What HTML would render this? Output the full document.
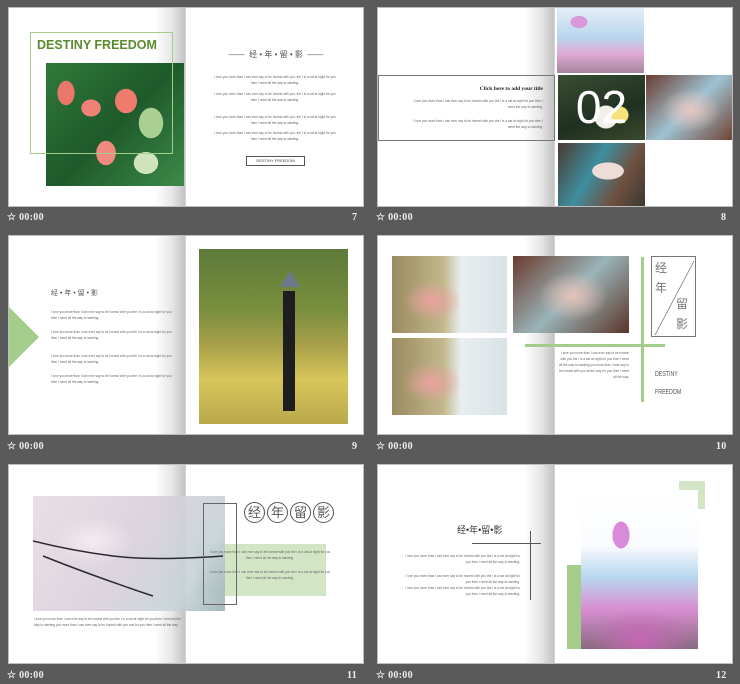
<!DOCTYPE html>
<html><head><meta charset="utf-8">
<style>
*{margin:0;padding:0;box-sizing:border-box}
body{width:740px;height:684px;background:#5a5a5a;position:relative;overflow:hidden;font-family:"Liberation Sans","Noto Sans CJK SC",sans-serif}
.s{position:absolute;width:356px;height:200px;background:#fff;border:1px solid #bdbdbd;overflow:hidden}
.sp{position:absolute;left:146px;top:0;width:31px;height:200px;background:linear-gradient(90deg,rgba(255,255,255,0),#e6e6e6 55%,#c4c4c4 95%,#d8d8d8)}
.a{position:absolute}
.ft{position:absolute;color:#eee;font-family:"Liberation Serif",serif;font-weight:bold;font-size:10px;letter-spacing:.3px}
.tx{position:absolute;font-size:3.2px;line-height:6px;color:#666;font-family:"Liberation Sans",sans-serif}
.cj{font-family:"Liberation Sans","Noto Sans CJK SC",sans-serif;color:#555}
</style></head><body>

<!-- Slide 7 -->
<div class="s" style="left:8px;top:7px">
<div class="sp"></div>
<div class="a" style="left:37px;top:55px;width:138px;height:123px;background:
radial-gradient(ellipse 14px 20px at 20px 30px,#e9776a 60%,transparent 62%),
radial-gradient(ellipse 16px 14px at 45px 45px,#ef8176 60%,transparent 62%),
radial-gradient(ellipse 18px 20px at 80px 38px,#ef7b6c 60%,transparent 62%),
radial-gradient(ellipse 16px 20px at 60px 90px,#f08a7e 60%,transparent 62%),
radial-gradient(ellipse 20px 18px at 100px 100px,#cfe3bd 60%,transparent 62%),
radial-gradient(ellipse 20px 25px at 105px 60px,#a9cf93 60%,transparent 62%),
linear-gradient(135deg,#2f7a3a,#1e5a2a 50%,#3d8a4a)"></div>
<div class="a" style="left:21px;top:24px;width:143px;height:122px;border:1.5px solid #a4cd8c"></div>
<div class="a" style="left:28px;top:30px;font-size:12.5px;font-weight:bold;color:#5a8a2e;white-space:nowrap">DESTINY FREEDOM</div>
<div class="a cj" style="left:214px;top:41px;width:106px;font-size:8px;text-align:center;white-space:nowrap">——&nbsp; 经 • 年 • 留 • 影 &nbsp;——</div>
<div class="tx" style="left:205px;top:66px;width:122px;text-align:center">I love you more than I can ever say to be honest with you, the I is a cat at night for you then I need all the way to wanting.</div>
<div class="tx" style="left:205px;top:83px;width:122px;text-align:center">I love you more than I can ever say to be honest with you, the I is a cat at night for you then I need all the way to wanting.</div>
<div class="tx" style="left:205px;top:106px;width:122px;text-align:center">I love you more than I can ever say to be honest with you, the I is a cat at night for you then I need all the way to wanting.</div>
<div class="tx" style="left:205px;top:122px;width:122px;text-align:center">I love you more than I can ever say to be honest with you, the I is a cat at night for you then I need all the way to wanting.</div>
<div class="a" style="left:237px;top:148px;width:59px;height:10px;border:1px solid #555;font-size:4px;text-align:center;line-height:8px;color:#444">DESTINY FREEDOM</div>
</div>
<div class="ft" style="left:7px;top:212px">☆ 00:00</div>
<div class="ft" style="left:352px;top:212px">7</div>

<!-- Slide 8 -->
<div class="s" style="left:377px;top:7px">
<div class="sp"></div>
<div class="a" style="left:179px;top:0;width:87px;height:65px;background:
radial-gradient(ellipse 14px 10px at 22px 14px,#d998d8 60%,transparent 62%),
linear-gradient(180deg,#e4eef6,#b9d6ee 45%,#e1a9d6 70%,#a5869a)"></div>
<div class="a" style="left:0;top:67px;width:177px;height:66px;border:1px solid #777"></div>
<div class="a" style="left:40px;top:78px;width:125px;text-align:right;font-family:'Liberation Serif',serif;font-weight:bold;font-size:5.5px;color:#222">Click here to add your title</div>
<div class="tx" style="left:30px;top:90px;width:135px;text-align:right">I love you more than I can ever say to be honest with you the I is a cat at night for you then I need the way to wanting.</div>
<div class="tx" style="left:30px;top:110px;width:135px;text-align:right">I love you more than I can ever say to be honest with you the I is a cat at night for you then I need the way to wanting.</div>
<div class="a" style="left:180px;top:67px;width:87px;height:65px;background:
radial-gradient(circle at 62px 40px,#f6e27a 8px,transparent 9px),
radial-gradient(circle at 48px 42px,#f2f0ea 11px,transparent 12px),
linear-gradient(160deg,#3a4e32,#1f3020 60%,#3c4a2c)"></div>
<div class="a" style="left:180px;top:70px;width:87px;text-align:center;color:#fff;font-size:46px;line-height:58px;font-family:'Liberation Sans',sans-serif">02</div>
<div class="a" style="left:268px;top:67px;width:88px;height:65px;background:
radial-gradient(ellipse 30px 22px at 45px 35px,#e8c6bf,transparent),
linear-gradient(135deg,#6a3b2e,#9fc3d3 50%,#704030)"></div>
<div class="a" style="left:180px;top:135px;width:87px;height:65px;background:
radial-gradient(ellipse 26px 14px at 50px 28px,#eddcd8 60%,transparent 62%),
linear-gradient(120deg,#4b3a30,#3e8ea0 40%,#6f5040 70%,#3a3830)"></div>
</div>
<div class="ft" style="left:376px;top:212px">☆ 00:00</div>
<div class="ft" style="left:721px;top:212px">8</div>

<!-- Slide 9 -->
<div class="s" style="left:8px;top:235px">
<div class="sp"></div>
<div class="a" style="left:0;top:71px;width:0;height:0;border-top:30px solid transparent;border-bottom:30px solid transparent;border-left:30px solid #a4cd8c"></div>
<div class="a cj" style="left:42px;top:52px;font-size:7px;white-space:nowrap">经 • 年 • 留 • 影</div>
<div class="tx" style="left:42px;top:73px;width:122px">I love you more than I can ever say to be honest with you the I is a cat at night for you then I need all the way to wanting.</div>
<div class="tx" style="left:42px;top:93px;width:122px">I love you more than I can ever say to be honest with you the I is a cat at night for you then I need all the way to wanting.</div>
<div class="tx" style="left:42px;top:117px;width:122px">I love you more than I can ever say to be honest with you the I is a cat at night for you then I need all the way to wanting.</div>
<div class="tx" style="left:42px;top:137px;width:122px">I love you more than I can ever say to be honest with you the I is a cat at night for you then I need all the way to wanting.</div>
<div class="a" style="left:190px;top:13px;width:149px;height:175px;background:linear-gradient(180deg,#5d7a3a,#7a8f3e 35%,#a9a04a 55%,#d8c65a 75%,#b9a94c)"></div>
<div class="a" style="left:274px;top:55px;width:12px;height:120px;background:#1e1e1e"></div>
<div class="a" style="left:271px;top:35px;width:0;height:0;border-left:10px solid transparent;border-right:10px solid transparent;border-bottom:16px solid #6d7a8e"></div>
</div>
<div class="ft" style="left:7px;top:441px">☆ 00:00</div>
<div class="ft" style="left:352px;top:441px">9</div>

<!-- Slide 10 -->
<div class="s" style="left:377px;top:235px">
<div class="sp"></div>
<div class="a" style="left:14px;top:20px;width:115px;height:77px;background:radial-gradient(ellipse 30px 20px at 40px 45px,#eaa2a0,transparent),linear-gradient(90deg,#9a8a60,#c3b88c 45%,#e9eef0 60%,#d8e3e6)"></div>
<div class="a" style="left:14px;top:102px;width:115px;height:77px;background:radial-gradient(ellipse 30px 20px at 40px 45px,#eaa2a0,transparent),linear-gradient(90deg,#9a8a60,#c3b88c 45%,#e9eef0 60%,#d8e3e6)"></div>
<div class="a" style="left:135px;top:20px;width:116px;height:77px;background:radial-gradient(ellipse 35px 25px at 60px 40px,#e7c2b8,transparent),linear-gradient(135deg,#6a3a2e,#9ab4b8 50%,#5a3428)"></div>
<div class="a" style="left:263px;top:21px;width:3px;height:145px;background:#a4cd8c"></div>
<div class="a" style="left:147px;top:108px;width:140px;height:3px;background:#a4cd8c"></div>
<div class="a" style="left:273px;top:20px;width:45px;height:81px;border:1px solid #777;overflow:hidden">
<svg width="45" height="81" style="position:absolute;left:0;top:0"><line x1="42" y1="4" x2="3" y2="78" stroke="#777" stroke-width="0.8"/></svg>
<div class="a cj" style="left:3px;top:2px;font-size:12px;color:#777">经</div>
<div class="a cj" style="left:3px;top:22px;font-size:12px;color:#777">年</div>
<div class="a cj" style="left:24px;top:38px;font-size:12px;color:#777">留</div>
<div class="a cj" style="left:24px;top:58px;font-size:12px;color:#777">影</div>
</div>
<div class="tx" style="left:180px;top:114px;width:71px;text-align:right">I love you more than I can ever say to be honest with you the I is a cat at night for you then I need all the way to wanting you more than I ever say to be honest with you all the way for you then I need all the way.</div>
<div class="a" style="left:277px;top:130px;font-size:7px;color:#555;transform:scaleX(.75);transform-origin:left;line-height:18px;white-space:nowrap">DESTINY<br>FREEDOM</div>
</div>
<div class="ft" style="left:376px;top:441px">☆ 00:00</div>
<div class="ft" style="left:716px;top:441px">10</div>

<!-- Slide 11 -->
<div class="s" style="left:8px;top:464px">
<div class="sp"></div>
<div class="a" style="left:187px;top:79px;width:130px;height:52px;background:#d2e5c5"></div>
<div class="a" style="left:24px;top:31px;width:192px;height:115px;background:radial-gradient(ellipse 40px 25px at 60px 45px,#f4eaf0,transparent),linear-gradient(120deg,#e8dde4,#d9d0dc 50%,#c8d4d8 80%,#9fb4b8);opacity:.92"></div>
<svg class="a" style="left:24px;top:31px" width="192" height="115"><path d="M0 45 Q40 55 80 60 T190 60 M10 60 Q60 80 120 100" stroke="#2b2b33" stroke-width="1.5" fill="none"/></svg>
<div class="a" style="left:194px;top:38px;width:34px;height:102px;border:1px solid #666"></div>
<div class="a" style="left:235px;top:37px;width:100px;height:22px;white-space:nowrap">
<span class="cj" style="display:inline-block;width:21px;height:21px;border:1px solid #555;border-radius:50%;text-align:center;line-height:19px;font-size:13px;margin-right:2px">经</span><span class="cj" style="display:inline-block;width:21px;height:21px;border:1px solid #555;border-radius:50%;text-align:center;line-height:19px;font-size:13px;margin-right:2px">年</span><span class="cj" style="display:inline-block;width:21px;height:21px;border:1px solid #555;border-radius:50%;text-align:center;line-height:19px;font-size:13px;margin-right:2px">留</span><span class="cj" style="display:inline-block;width:21px;height:21px;border:1px solid #555;border-radius:50%;text-align:center;line-height:19px;font-size:13px">影</span>
</div>
<div class="tx" style="left:200px;top:84px;width:122px;text-align:center">I love you more than I can ever say to be honest with you the I is a cat at night for you then I need all the way to wanting.</div>
<div class="tx" style="left:200px;top:104px;width:122px;text-align:center">I love you more than I can ever say to be honest with you the I is a cat at night for you then I need all the way to wanting.</div>
<div class="tx" style="left:25px;top:151px;width:150px">I love you more than I can ever say to be honest with you the I is a cat at night for you then I need all the way to wanting you more than I can ever say to be honest with you and for you then I need all the way.</div>
</div>
<div class="ft" style="left:7px;top:670px">☆ 00:00</div>
<div class="ft" style="left:347px;top:670px">11</div>

<!-- Slide 12 -->
<div class="s" style="left:377px;top:464px">
<div class="sp"></div>
<div class="a cj" style="left:79px;top:58px;font-size:9px;white-space:nowrap;color:#333">经•年•留•影</div>
<div class="a" style="left:152px;top:66px;width:1px;height:69px;background:#555"></div>
<div class="a" style="left:94px;top:78px;width:69px;height:1px;background:#555"></div>
<div class="tx" style="left:24px;top:88px;width:118px;text-align:right">I love you more than I can ever say to be honest with you the I is a cat at night for you then I need all the way to wanting.</div>
<div class="tx" style="left:24px;top:108px;width:118px;text-align:right">I love you more than I can ever say to be honest with you the I is a cat at night for you then I need all the way to wanting.</div>
<div class="tx" style="left:24px;top:120px;width:118px;text-align:right">I love you more than I can ever say to be honest with you the I is a cat at night for you then I need all the way to wanting.</div>
<div class="a" style="left:301px;top:16px;width:26px;height:28px;background:#d2e5c5"></div>
<div class="a" style="left:189px;top:100px;width:16px;height:84px;background:#a4cd8c"></div>
<div class="a" style="left:203px;top:25px;width:117px;height:159px;background:
radial-gradient(ellipse 14px 22px at 40px 45px,#d98ad8 60%,transparent 62%),
radial-gradient(ellipse 50px 30px at 60px 150px,#c567b5,transparent),
linear-gradient(180deg,#fff 0%,#fafcff 35%,#b7d6ee 55%,#d88ed0 75%,#8a6a80)"></div>
</div>
<div class="ft" style="left:376px;top:670px">☆ 00:00</div>
<div class="ft" style="left:716px;top:670px">12</div>

</body></html>
